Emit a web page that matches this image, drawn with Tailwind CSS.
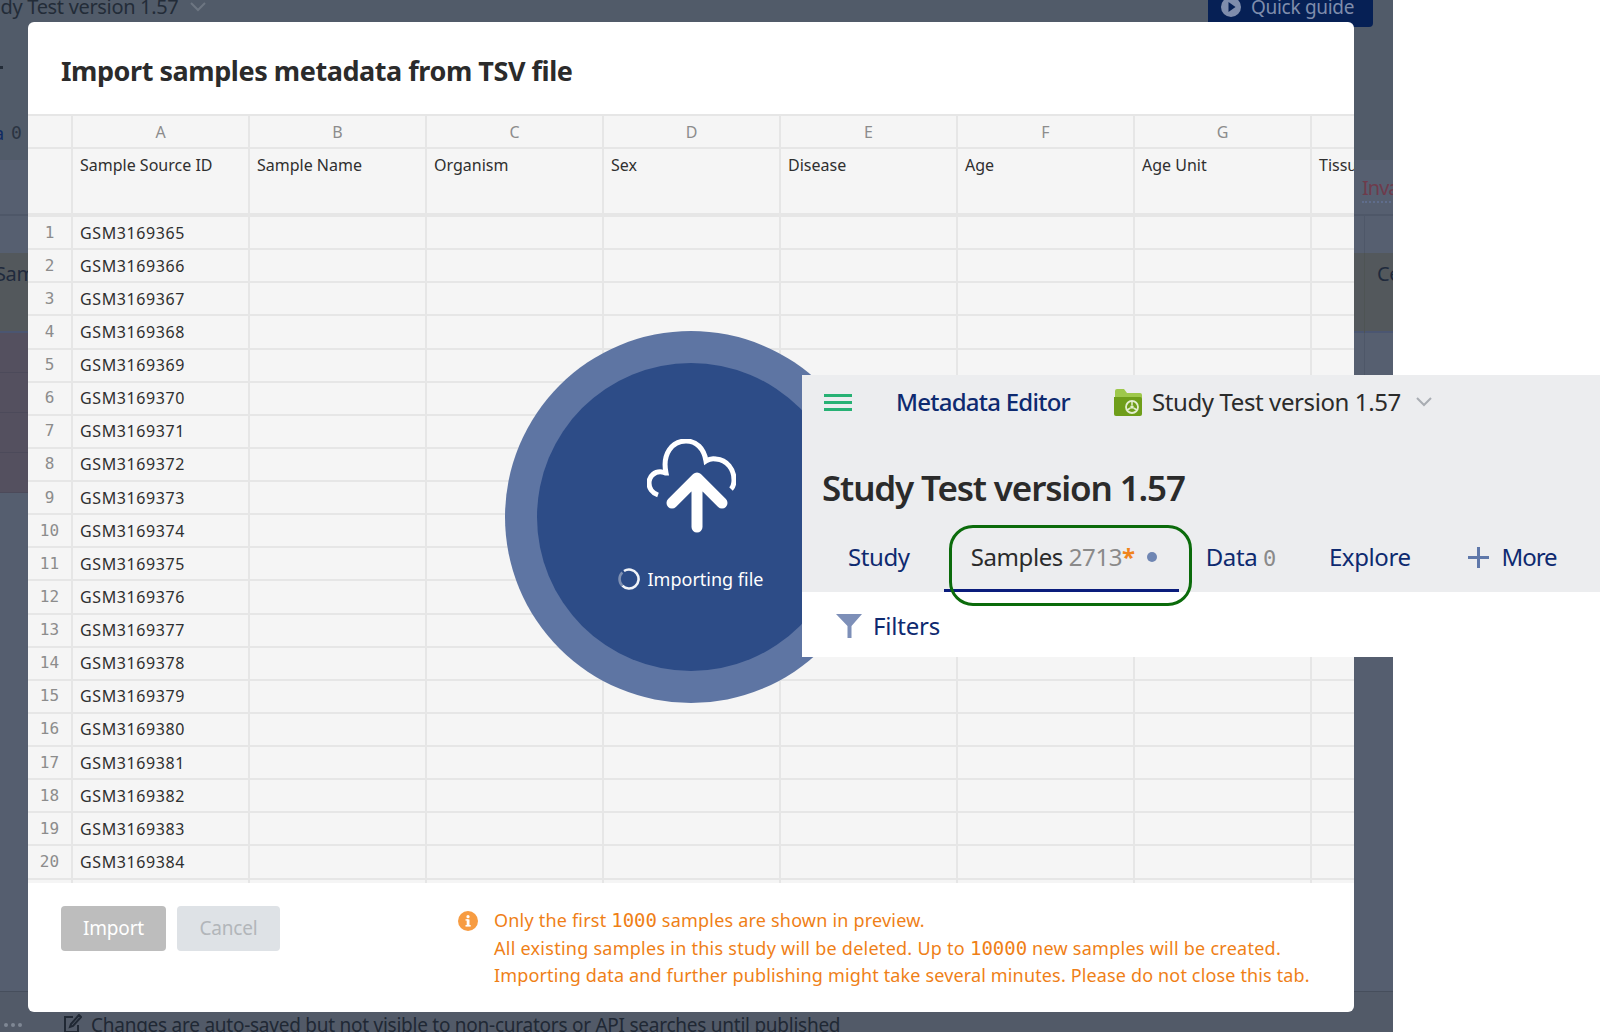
<!DOCTYPE html>
<html lang="en">
<head>
<meta charset="UTF-8">
<title>Import samples metadata from TSV file</title>
<script src="https://cdn.jsdelivr.net/npm/@tailwindcss/browser@4"></script>
</head>
<body class="bg-white font-['Noto_Sans',sans-serif]">
<div class="relative w-[1600px] h-[1032px] overflow-hidden bg-white">

  <!-- page behind the backdrop -->
  <div class="absolute left-0 top-0 w-[1393px] h-full flex flex-col overflow-hidden bg-[#515b69] text-[#1f2a3c]">
    <div class="h-[160px] shrink-0 relative">
      <div class="flex items-center h-[13px] text-[20px] tracking-[-0.33px] text-[#232c38] ml-[-29px] gap-[12px] whitespace-nowrap"><span>Study Test version 1.57</span>
        <svg width="16" height="10" viewBox="0 0 16 10" fill="none" stroke="#6d7682" stroke-width="2"><path d="M1 1l7 7 7-7"/></svg>
      </div>
      <div class="absolute left-[1208px] top-0 w-[165px] h-[27px] bg-[#062055] rounded-b-[4px] flex items-start pl-[13px] text-[#7f8dac]">
        <div class="flex items-center gap-[10px] h-[14px] text-[19px] tracking-[-0.3px] whitespace-nowrap">
          <svg width="20" height="20" viewBox="0 0 20 20"><circle cx="10" cy="10" r="10" fill="#7f8dac"/><path d="M7.5 5l7 5-7 5z" fill="#062055"/></svg>
          <span>Quick guide</span>
        </div>
      </div>
      <div class="absolute left-0 top-[66px] w-[3px] h-[3px] bg-[#232c38]"></div>
      <div class="absolute left-0 top-[122px] flex gap-[7px] text-[18px] leading-[22px]"><span class="text-[#0f2a63] ml-[-6px]">a</span><span class="font-['DejaVu_Sans_Mono',monospace] text-[#2b3442]">0</span></div>
    </div>
    <div class="h-[56px] shrink-0 bg-[#565f70] border-b-2 border-[#4e5768] relative">
      <div class="absolute left-[1362px] top-[15px] text-[20px] leading-[26px] tracking-[-1px] text-[#6e3b4c] border-b-2 border-dotted border-[#5f6d8c]">Invalid</div>
      <div class="absolute left-[1364px] top-[56px] w-[1px] h-[37px] bg-[#4e5768]"></div>
    </div>
    <div class="h-[37px] shrink-0 bg-[#565f70]"></div>
    <div class="h-[80px] shrink-0 bg-[#53585c] border-b-2 border-[#4b5671] relative text-[20px] tracking-[-0.4px]">
      <span class="absolute left-[-5px] top-[6px]">Sample</span>
      <span class="absolute left-[1377px] top-[6px]">Cell</span>
      <div class="absolute left-[1364px] top-0 w-[1px] h-[80px] bg-[#4e5454]"></div>
    </div>
    <div class="h-[160px] shrink-0 bg-[#565f70] relative">
      <div class="w-[300px] h-full flex flex-col">
        <div class="h-[40px] bg-[#54505f] border-b border-[#4c4a5a]"></div>
        <div class="h-[40px] bg-[#54505f] border-b border-[#4c4a5a]"></div>
        <div class="h-[40px] bg-[#54505f] border-b border-[#4c4a5a]"></div>
        <div class="h-[40px] bg-[#54505f] border-b border-[#4c4a5a]"></div>
      </div>
      <div class="absolute left-[1364px] top-0 w-[1px] h-[42px] bg-[#4e5768]"></div>
    </div>
    <div class="h-[498px] shrink-0 bg-[#555e6f]"></div>
    <div class="flex-1 bg-[#525a68] border-t border-[#464e5c] flex items-start pt-[20px] relative text-[19px] leading-[26px] tracking-[-0.25px] text-[#202834]">
      <div class="absolute left-[4px] top-[31px] flex gap-[3px]"><i class="size-[4px] rounded-full bg-[#7f8794]"></i><i class="size-[4px] rounded-full bg-[#7f8794]"></i><i class="size-[4px] rounded-full bg-[#7f8794]"></i></div>
      <svg class="ml-[63px] mt-[2px]" width="19" height="19" viewBox="0 0 19 19" fill="none" stroke="#202834" stroke-width="2"><path d="M10 3H2v15h13v-7M16 1L8 10l-1 3 3-1 8-9z"/></svg>
      <span class="ml-[9px] whitespace-nowrap">Changes are auto-saved but not visible to non-curators or API searches until published</span>
    </div>
  </div>

  <!-- import dialog -->
  <div class="absolute left-[28px] top-[22px] w-[1326px] h-[990px] bg-white rounded-[6px] overflow-hidden flex flex-col">
    <h1 class="h-[92px] shrink-0 flex items-center pl-[33px] pt-[6px] text-[27px] tracking-[-0.44px] font-bold text-[#2b2b2b]">Import samples metadata from TSV file</h1>
    <div class="h-[769px] shrink-0 overflow-hidden bg-[#f5f5f5]">
      <table class="table-fixed w-[1461px] border-separate border-spacing-0 border-t-2 border-[#e6e6e6] text-[16px] text-[#2f2f2f] [&_td]:border-r-2 [&_td]:border-b-2 [&_td]:border-[#e6e6e6] [&_td]:px-[7px] [&_td]:align-middle [&_td]:whitespace-nowrap [&_td]:tracking-[0.6px] [&_td:first-child]:text-center [&_td:first-child]:tracking-normal [&_td:first-child]:text-[#8c8c8c] [&_td:first-child]:font-['DejaVu_Sans_Mono',monospace] [&_td]:h-[33.13px]">
        <colgroup><col class="w-[45px]"><col class="w-[177px]"><col class="w-[177px]"><col class="w-[177px]"><col class="w-[177px]"><col class="w-[177px]"><col class="w-[177px]"><col class="w-[177px]"><col class="w-[177px]"></colgroup>
        <thead>
          <tr class="text-center text-[#8c8c8c]"><th class="h-[33px] font-normal border-r-2 border-b-2 border-[#e6e6e6]"></th><th class="font-normal border-r-2 border-b-2 border-[#e6e6e6]">A</th><th class="font-normal border-r-2 border-b-2 border-[#e6e6e6]">B</th><th class="font-normal border-r-2 border-b-2 border-[#e6e6e6]">C</th><th class="font-normal border-r-2 border-b-2 border-[#e6e6e6]">D</th><th class="font-normal border-r-2 border-b-2 border-[#e6e6e6]">E</th><th class="font-normal border-r-2 border-b-2 border-[#e6e6e6]">F</th><th class="font-normal border-r-2 border-b-2 border-[#e6e6e6]">G</th><th class="font-normal border-r-2 border-b-2 border-[#e6e6e6]"></th></tr>
          <tr class="text-left text-[#2f2f2f]"><th class="h-[68px] font-normal border-r-2 border-b-4 border-[#e6e6e6]"></th><th class="font-normal align-top pt-[4px] px-[7px] border-r-2 border-b-4 border-[#e6e6e6]">Sample Source ID</th><th class="font-normal align-top pt-[4px] px-[7px] border-r-2 border-b-4 border-[#e6e6e6]">Sample Name</th><th class="font-normal align-top pt-[4px] px-[7px] border-r-2 border-b-4 border-[#e6e6e6]">Organism</th><th class="font-normal align-top pt-[4px] px-[7px] border-r-2 border-b-4 border-[#e6e6e6]">Sex</th><th class="font-normal align-top pt-[4px] px-[7px] border-r-2 border-b-4 border-[#e6e6e6]">Disease</th><th class="font-normal align-top pt-[4px] px-[7px] border-r-2 border-b-4 border-[#e6e6e6]">Age</th><th class="font-normal align-top pt-[4px] px-[7px] border-r-2 border-b-4 border-[#e6e6e6]">Age Unit</th><th class="font-normal align-top pt-[4px] px-[7px] border-r-2 border-b-4 border-[#e6e6e6]">Tissue</th></tr>
        </thead>
        <tbody>
          <tr><td>1</td><td>GSM3169365</td><td></td><td></td><td></td><td></td><td></td><td></td><td></td></tr>
          <tr><td>2</td><td>GSM3169366</td><td></td><td></td><td></td><td></td><td></td><td></td><td></td></tr>
          <tr><td>3</td><td>GSM3169367</td><td></td><td></td><td></td><td></td><td></td><td></td><td></td></tr>
          <tr><td>4</td><td>GSM3169368</td><td></td><td></td><td></td><td></td><td></td><td></td><td></td></tr>
          <tr><td>5</td><td>GSM3169369</td><td></td><td></td><td></td><td></td><td></td><td></td><td></td></tr>
          <tr><td>6</td><td>GSM3169370</td><td></td><td></td><td></td><td></td><td></td><td></td><td></td></tr>
          <tr><td>7</td><td>GSM3169371</td><td></td><td></td><td></td><td></td><td></td><td></td><td></td></tr>
          <tr><td>8</td><td>GSM3169372</td><td></td><td></td><td></td><td></td><td></td><td></td><td></td></tr>
          <tr><td>9</td><td>GSM3169373</td><td></td><td></td><td></td><td></td><td></td><td></td><td></td></tr>
          <tr><td>10</td><td>GSM3169374</td><td></td><td></td><td></td><td></td><td></td><td></td><td></td></tr>
          <tr><td>11</td><td>GSM3169375</td><td></td><td></td><td></td><td></td><td></td><td></td><td></td></tr>
          <tr><td>12</td><td>GSM3169376</td><td></td><td></td><td></td><td></td><td></td><td></td><td></td></tr>
          <tr><td>13</td><td>GSM3169377</td><td></td><td></td><td></td><td></td><td></td><td></td><td></td></tr>
          <tr><td>14</td><td>GSM3169378</td><td></td><td></td><td></td><td></td><td></td><td></td><td></td></tr>
          <tr><td>15</td><td>GSM3169379</td><td></td><td></td><td></td><td></td><td></td><td></td><td></td></tr>
          <tr><td>16</td><td>GSM3169380</td><td></td><td></td><td></td><td></td><td></td><td></td><td></td></tr>
          <tr><td>17</td><td>GSM3169381</td><td></td><td></td><td></td><td></td><td></td><td></td><td></td></tr>
          <tr><td>18</td><td>GSM3169382</td><td></td><td></td><td></td><td></td><td></td><td></td><td></td></tr>
          <tr><td>19</td><td>GSM3169383</td><td></td><td></td><td></td><td></td><td></td><td></td><td></td></tr>
          <tr><td>20</td><td>GSM3169384</td><td></td><td></td><td></td><td></td><td></td><td></td><td></td></tr>
          <tr><td></td><td></td><td></td><td></td><td></td><td></td><td></td><td></td><td></td></tr>
        </tbody>
      </table>
    </div>
    <div class="flex-1 flex items-start pl-[33px] pt-[23px]">
      <button class="w-[105px] h-[45px] rounded-[4px] bg-[#bdbdbd] text-white text-[19px] tracking-[-0.2px]">Import</button>
      <button class="w-[103px] h-[45px] ml-[11px] rounded-[4px] bg-[#dee2e6] text-[#b2b6ba] text-[19px] tracking-[-0.2px]">Cancel</button>
      <svg class="ml-[178px] mt-[5px] shrink-0" width="20" height="20" viewBox="0 0 20 20"><circle cx="10" cy="10" r="10" fill="#f79c42"/><rect x="8.7" y="8.5" width="2.8" height="6.5" fill="#fff"/><rect x="7.5" y="14" width="5.2" height="1.6" fill="#fff"/><rect x="7.5" y="8.2" width="3" height="1.4" fill="#fff"/><circle cx="10" cy="5.7" r="1.6" fill="#fff"/></svg>
      <div class="ml-[16px] mt-[1px] text-[18px] leading-[27.6px] tracking-[0.15px] text-[#ef7f17] whitespace-nowrap">
        <p class="tracking-[0.2px]">Only the first <span class="font-['DejaVu_Sans_Mono',monospace] text-[19px] leading-none tracking-normal">1000</span> samples are shown in preview.</p>
        <p class="tracking-[0.26px]">All existing samples in this study will be deleted. Up to <span class="font-['DejaVu_Sans_Mono',monospace] text-[19px] leading-none tracking-normal">10000</span> new samples will be created.</p>
        <p>Importing data and further publishing might take several minutes. Please do not close this tab.</p>
      </div>
    </div>
  </div>

  <!-- importing overlay -->
  <div class="absolute left-[505px] top-[331px] size-[372px] rounded-full bg-[#5e75a3] flex items-center justify-center">
    <div class="size-[308px] rounded-full bg-[#2d4c87] flex flex-col items-center pt-[76px]">
      <svg width="89" height="94" viewBox="0 0 89 94" fill="none" stroke="#fff" stroke-linecap="round">
        <path stroke-width="5" stroke-linecap="butt" d="M11 56C5 54 2 49 2 44c0-7 6-12 13-11 2 0 3 1 4 1C15 15 25 2 39 2c10 0 18 7 20 20 3-2 6-3 10-2 11 1 18 10 18 21 0 4-1 7-3 9"/>
        <path stroke-width="11" stroke-linejoin="round" d="M25 64L50 39l25 25M50 39v49" />
      </svg>
      <div class="flex items-center gap-[8px] mt-[34px] text-white text-[18px] leading-[24px]">
        <svg class="-ml-[1px]" width="22" height="22" viewBox="0 0 22 22" fill="none" stroke-width="2.6"><path d="M6 3A9.5 9.5 0 1 1 4.3 17.7" stroke="#f2f4f8"/><path d="M4.3 17.7A9.5 9.5 0 0 1 4.3 4.3" stroke="#7f90b2"/></svg>
        <span>Importing file</span>
      </div>
    </div>
  </div>

  <!-- zoomed-in callout of the study tabs -->
  <div class="absolute left-[802px] top-[375px] w-[798px] h-[282px] bg-white flex flex-col">
    <div class="h-[217px] shrink-0 bg-[#ecedef] relative">
      <div class="flex items-center h-[54px] pl-[22px]">
        <div class="w-[28px] flex flex-col gap-[4px]"><i class="h-[3px] bg-[#27b174]"></i><i class="h-[3px] bg-[#27b174]"></i><i class="h-[3px] bg-[#27b174]"></i></div>
        <span class="ml-[44px] text-[24px] tracking-[-0.75px] font-medium text-[#0e2a70]">Metadata Editor</span>
        <svg class="ml-[44px]" width="28" height="27" viewBox="0 0 28 27"><path d="M1 2a2 2 0 0 1 2-2h7l3 4h13a2 2 0 0 1 2 2v6H1z" fill="#9ec84b"/><path d="M0 8h26a2 2 0 0 1 2 2v15a2 2 0 0 1-2 2H2a2 2 0 0 1-2-2z" fill="#6f9e1a"/><circle cx="18" cy="18" r="6" fill="none" stroke="#e4eed0" stroke-width="1.8"/><circle cx="18" cy="18" r="1.8" fill="#e4eed0"/><path d="M18 12v4M13 21l3.5-2M23 21l-3.5-2" stroke="#e4eed0" stroke-width="1.5"/></svg>
        <span class="ml-[10px] text-[24px] tracking-[-0.4px] text-[#2b2b2b] whitespace-nowrap">Study Test version 1.57</span>
        <svg class="ml-[15px]" width="16" height="10" viewBox="0 0 16 10" fill="none" stroke="#a9adb3" stroke-width="2"><path d="M1 1l7 7 7-7"/></svg>
      </div>
      <h2 class="mt-[36px] ml-[20px] text-[35px] leading-[46px] tracking-[-1.15px] font-semibold text-[#2b2b2b] whitespace-nowrap">Study Test version 1.57</h2>
      <div class="absolute left-0 right-0 top-[160px] flex items-center text-[24px] leading-[44px] tracking-[-0.4px] text-[#0e2a70] whitespace-nowrap">
        <span class="ml-[46px]">Study</span>
        <span class="ml-[61px] text-[#2b2b2b]">Samples <span class="text-[#8a8a8a]">2713</span><span class="text-[#f0841c] font-bold">*</span></span>
        <i class="ml-[12px] size-[10px] rounded-full bg-[#6f86b3]"></i>
        <span class="ml-[49px]">Data <span class="font-['DejaVu_Sans_Mono',monospace] text-[22px] leading-none text-[#8a8a8a]">0</span></span>
        <span class="ml-[53px]">Explore</span>
        <svg class="ml-[57px]" width="21" height="21" viewBox="0 0 21 21" stroke="#5f78aa" stroke-width="3"><path d="M10.5 0v21M0 10.5h21"/></svg>
        <span class="ml-[13px] tracking-[-1.1px]">More</span>
      </div>
      <div class="absolute left-[142px] top-[214px] w-[235px] h-[3px] bg-[#0a1c7c]"></div>
    </div>
    <div class="flex items-center h-[65px] pl-[34px] pt-[2px]">
      <svg width="26" height="24" viewBox="0 0 26 24"><path d="M0 0h26L15.5 12v12h-4V12z" fill="#7d8fb8"/></svg>
      <span class="ml-[11px] text-[24px] tracking-[-0.2px] text-[#0e2a70]">Filters</span>
    </div>
    <div class="absolute left-[147px] top-[150px] w-[243px] h-[81px] rounded-[24px] border-[3px] border-[#0b6b0b]"></div>
  </div>
</div>
</body>
</html>
